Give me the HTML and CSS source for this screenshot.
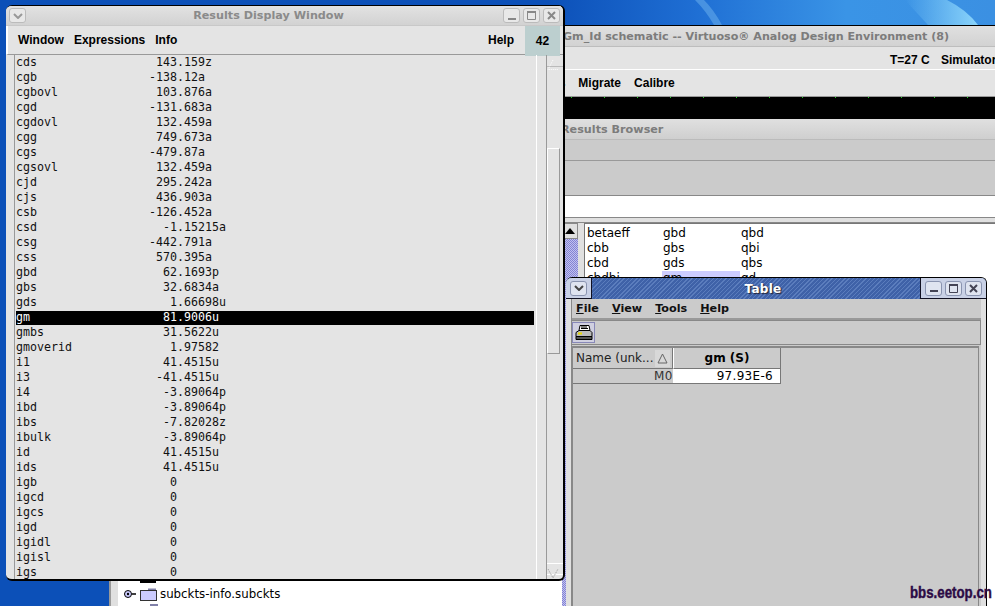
FILE: index.html
```html
<!DOCTYPE html>
<html lang="en">
<head>
<meta charset="utf-8">
<title>Results Display Window</title>
<link rel="stylesheet" href="styles.css">
</head>
<body>
<div class="desktop">
  <svg class="wallpaper" width="995" height="606" viewBox="0 0 995 606">
    <defs>
      <linearGradient id="sky" x1="0" y1="0" x2="1" y2="0"><stop offset=".55" stop-color="#0c50b8"/><stop offset=".7" stop-color="#1f6fd4"/><stop offset=".85" stop-color="#3a94e6"/><stop offset="1" stop-color="#3b90e2"/></linearGradient>
      <linearGradient id="band" x1="0" y1="0" x2="1" y2="0"><stop offset="0" stop-color="#8ad4fb" stop-opacity="0"/><stop offset="1" stop-color="#8ad4fb"/></linearGradient>
    </defs>
    <rect width="995" height="606" fill="url(#sky)"/>
    <path d="M905 0h42q20 10 31 25h-50z" fill="url(#band)"/>
    <path d="M695 0h9q10 10 18 25h-8q-8-14-19-25z" fill="#6fb4ee" opacity=".5"/>
  </svg>

  <section class="win-ade">
    <div class="ade-title">Gm_Id schematic -- Virtuoso® Analog Design Environment (8)</div>
    <div class="ade-status"><span class="st-temp">T=27 C</span><span>Simulator: spectre</span></div>
    <div class="ade-menu"><span>Results</span><span>Migrate</span><span>Calibre</span></div>
    <div class="ade-scope"></div>
    <div class="rb-title">Results Browser</div>
    <div class="rb-tool"></div>
    <div class="rb-tool2"></div>
    <div class="rb-entry"></div>
    <div class="rb-sep"></div>
    <div class="rb-body">
      <div class="tree">
        <div class="tree-stub"></div>
        <div class="tree-row">
          <svg class="knob" width="14" height="10" viewBox="0 0 14 10"><circle cx="5" cy="5" r="3.5" fill="#ccccff" stroke="#000"/><circle cx="5" cy="5" r="1.2" fill="#000"/><path d="M9 5h4" stroke="#000" stroke-width="1.5"/></svg>
          <svg width="17" height="14" viewBox="0 0 17 14"><path d="M8 1.5h8v2H8z" fill="#8080a8"/><rect x="0.5" y="3.5" width="16" height="10" fill="#ccccff" stroke="#333"/></svg>
          <span>subckts-info.subckts</span>
        </div>
        <div class="tree-next"></div>
      </div>
      <div class="rb-scroll"><div class="rb-up"><svg width="10" height="6" viewBox="0 0 10 6"><path d="M0 6 5 0l5 6z" fill="#000"/></svg></div><div class="rb-track"></div></div>
      <div class="sig-list">
        <span>betaeff</span><span>gbd</span><span>qbd</span>
        <span>cbb</span><span>gbs</span><span>qbi</span>
        <span>cbd</span><span>gds</span><span>qbs</span>
        <span>cbdbi</span><span class="sig-sel">gm</span><span>qd</span>
      </div>
    </div>
  </section>

  <section class="win-results">
    <header class="rd-title">
      <button class="wbtn"><svg width="10" height="6" viewBox="0 0 10 6"><path d="M1 1l4 4 4-4" fill="none" stroke="#999" stroke-width="2"/></svg></button>
      <span class="rd-title-text">Results Display Window</span>
      <button class="wbtn"><svg width="8" height="8" viewBox="0 0 8 8"><path d="M0 6h8v2H0z" fill="#888"/></svg></button>
      <button class="wbtn"><svg width="9" height="9" viewBox="0 0 9 9"><path d="M.5 1.5h8v7h-8z" fill="none" stroke="#888"/><path d="M0 0h9v2H0z" fill="#888"/></svg></button>
      <button class="wbtn"><svg width="9" height="9" viewBox="0 0 9 9"><path d="M1 1l7 7M8 1 1 8" stroke="#888" stroke-width="2"/></svg></button>
    </header>
    <nav class="rd-menu">
      <span>Window</span><span>Expressions</span><span>Info</span>
      <span class="rd-help">Help</span>
      <span class="rd-count">42</span>
    </nav>
    <div class="rd-body">
      <div class="rd-list">
        <div class="row"><span class="nm">cds</span><span class="int">143</span>.159z</div>
        <div class="row"><span class="nm">cgb</span><span class="int">-138</span>.12a</div>
        <div class="row"><span class="nm">cgbovl</span><span class="int">103</span>.876a</div>
        <div class="row"><span class="nm">cgd</span><span class="int">-131</span>.683a</div>
        <div class="row"><span class="nm">cgdovl</span><span class="int">132</span>.459a</div>
        <div class="row"><span class="nm">cgg</span><span class="int">749</span>.673a</div>
        <div class="row"><span class="nm">cgs</span><span class="int">-479</span>.87a</div>
        <div class="row"><span class="nm">cgsovl</span><span class="int">132</span>.459a</div>
        <div class="row"><span class="nm">cjd</span><span class="int">295</span>.242a</div>
        <div class="row"><span class="nm">cjs</span><span class="int">436</span>.903a</div>
        <div class="row"><span class="nm">csb</span><span class="int">-126</span>.452a</div>
        <div class="row"><span class="nm">csd</span><span class="int">-1</span>.15215a</div>
        <div class="row"><span class="nm">csg</span><span class="int">-442</span>.791a</div>
        <div class="row"><span class="nm">css</span><span class="int">570</span>.395a</div>
        <div class="row"><span class="nm">gbd</span><span class="int">62</span>.1693p</div>
        <div class="row"><span class="nm">gbs</span><span class="int">32</span>.6834a</div>
        <div class="row"><span class="nm">gds</span><span class="int">1</span>.66698u</div>
        <div class="row row-sel"><span class="nm">gm</span><span class="int">81</span>.9006u</div>
        <div class="row"><span class="nm">gmbs</span><span class="int">31</span>.5622u</div>
        <div class="row"><span class="nm">gmoverid</span><span class="int">1</span>.97582</div>
        <div class="row"><span class="nm">i1</span><span class="int">41</span>.4515u</div>
        <div class="row"><span class="nm">i3</span><span class="int">-41</span>.4515u</div>
        <div class="row"><span class="nm">i4</span><span class="int">-3</span>.89064p</div>
        <div class="row"><span class="nm">ibd</span><span class="int">-3</span>.89064p</div>
        <div class="row"><span class="nm">ibs</span><span class="int">-7</span>.82028z</div>
        <div class="row"><span class="nm">ibulk</span><span class="int">-3</span>.89064p</div>
        <div class="row"><span class="nm">id</span><span class="int">41</span>.4515u</div>
        <div class="row"><span class="nm">ids</span><span class="int">41</span>.4515u</div>
        <div class="row"><span class="nm">igb</span><span class="int">0</span></div>
        <div class="row"><span class="nm">igcd</span><span class="int">0</span></div>
        <div class="row"><span class="nm">igcs</span><span class="int">0</span></div>
        <div class="row"><span class="nm">igd</span><span class="int">0</span></div>
        <div class="row"><span class="nm">igidl</span><span class="int">0</span></div>
        <div class="row"><span class="nm">igisl</span><span class="int">0</span></div>
        <div class="row"><span class="nm">igs</span><span class="int">0</span></div>
      </div>
      <div class="rd-scroll">
        <div class="rd-arrow"><svg width="12" height="11" viewBox="0 0 12 11"><path d="M6 1 1 10.500h10" fill="none" stroke="#fff" stroke-dasharray="1 1"/></svg></div>
        <div class="rd-thumb"></div>
        <div class="rd-arrow rd-arrow-down"><svg width="12" height="11" viewBox="0 0 12 11"><path d="M1 1l5 9 5-9" fill="none" stroke="#999" stroke-dasharray="1 1"/></svg></div>
      </div>
    </div>
  </section>

  <section class="win-table">
    <header class="tb-title">
      <div class="tb-cap tb-cap-left"><button class="wbtn wbtn-b"><svg width="10" height="6" viewBox="0 0 10 6"><path d="M1 1l4 4 4-4" fill="none" stroke="#444" stroke-width="2"/></svg></button></div>
      <span class="tb-title-text">Table</span>
      <div class="tb-cap">
        <button class="wbtn wbtn-b"><svg width="8" height="8" viewBox="0 0 8 8"><path d="M0 6h8v2H0z" fill="#445"/></svg></button>
        <button class="wbtn wbtn-b"><svg width="9" height="9" viewBox="0 0 9 9"><path d="M.5 1.5h8v7h-8z" fill="none" stroke="#445"/><path d="M0 0h9v2H0z" fill="#445"/></svg></button>
        <button class="wbtn wbtn-b"><svg width="9" height="9" viewBox="0 0 9 9"><path d="M1 1l7 7M8 1 1 8" stroke="#445" stroke-width="2"/></svg></button>
      </div>
    </header>
    <div class="tb-inner">
      <nav class="tb-menu">
        <span><u>F</u>ile</span><span><u>V</u>iew</span><span><u>T</u>ools</span><span><u>H</u>elp</span>
      </nav>
      <div class="tb-tools">
        <button class="tb-print"><svg width="18" height="16" viewBox="0 0 18 16"><path d="M5 .5h9l1 5H4z" fill="#fff" stroke="#000"/><path d="M6 2h6M6 3.500h7" stroke="#000"/><path d="M1 7.500l3-2h11l2 2v4H1z" fill="#bbb" stroke="#000"/><path d="M1 11.500h16v3H1z" fill="#555" stroke="#000"/><path d="M3 8.500h4" stroke="#e8d800" stroke-width="2"/></svg></button>
      </div>
      <div class="tb-table">
        <div class="tb-grid">
          <div class="th th-name"><span>Name (unk...</span><span class="sort"><svg width="11" height="11" viewBox="0 0 11 11"><path d="M5.500 1 1 10h9z" fill="none" stroke="#666"/></svg></span></div>
          <div class="th th-gm">gm (S)</div>
          <div class="td-name">M0</div>
          <div class="td-val">97.93E-6</div>
        </div>
      </div>
    </div>
  </section>

  <div class="watermark">bbs.eetop.cn</div>
</div>
</body>
</html>
```

FILE: styles.css
```css
* { box-sizing: border-box; }
html, body { margin: 0; padding: 0; }
body { font-family: "DejaVu Sans", sans-serif; }
button { padding: 0; margin: 0; font: inherit; }

.desktop {
  position: relative;
  width: 995px;
  height: 606px;
  overflow: hidden;
  background: #0a49ab;
}
.wallpaper { position: absolute; left: 0; top: 0; display: block; }

/* Analog Design Environment window, behind */
.win-ade {
  position: absolute;
  left: 109px;
  top: 25px;
  width: 890px;
  height: 581px;
  display: flex;
  flex-direction: column;
  border-top: 1px solid #000;
  background: #e4e4e4;
  overflow: hidden;
}
.ade-title {
  height: 21px;
  flex: none;
  padding-left: 454px;
  font-size: 11.120px;
  font-weight: bold;
  line-height: 21px;
  color: #7c7c7c;
  white-space: nowrap;
  background: linear-gradient(#e0e0e0, #d2d2d2);
  border-bottom: 1px solid #bdbdbd;
}
.ade-status {
  height: 23px;
  flex: none;
  display: flex;
  padding-left: 781px;
  font-family: "Liberation Sans", sans-serif;
  font-size: 12px;
  font-weight: bold;
  line-height: 27px;
  white-space: nowrap;
  border-bottom: 1px solid #fff;
}
.st-temp { width: 51px; flex: none; }
.ade-menu {
  height: 27px;
  flex: none;
  display: flex;
  gap: 13px;
  padding-left: 413px;
  font-family: "Liberation Sans", sans-serif;
  font-size: 12px;
  font-weight: bold;
  line-height: 27px;
  border-bottom: 1px solid #999;
}
.ade-scope {
  height: 22px;
  flex: none;
  background:
    repeating-linear-gradient(90deg, #1fd01f 0 1px, transparent 1px 33px) 0 0 / 100% 1px no-repeat,
    #000;
}
.rb-title {
  height: 21px;
  flex: none;
  padding-left: 452px;
  font-size: 11.200px;
  font-weight: bold;
  line-height: 22px;
  color: #7c7c7c;
  background: linear-gradient(#e0e0e0, #cfcfcf);
  border-bottom: 1px solid #bbb;
}
.rb-tool { height: 21px; flex: none; background: #cbcbcb; border-bottom: 1px solid #999; }
.rb-tool2 { height: 35px; flex: none; background: #cbcbcb; border-bottom: 1px solid #888; }
.rb-entry { height: 22px; flex: none; background: #fff; border-bottom: 1px solid #888; }
.rb-sep { height: 5px; flex: none; background: #e0e0e0; border-bottom: 1px solid #888; }
.rb-body {
  flex: 1;
  min-height: 0;
  display: flex;
  padding-left: 7px;
  border-left: 2px solid #999;
  background: #e0e0e0;
}
.tree {
  width: 444px;
  flex: none;
  display: flex;
  flex-direction: column;
  justify-content: flex-end;
  padding-left: 5px;
  background: #fff;
}
.tree-stub { width: 16px; height: 2px; margin: 0 0 4px 17px; background: #000; }
.tree-row {
  display: flex;
  align-items: center;
  gap: 3px;
  font-size: 11.800px;
  line-height: 14px;
  height: 14px;
}
.tree-next { width: 8px; height: 2px; margin: 3px 0 0 27px; background: #8080a8; }
.rb-scroll { width: 16px; flex: none; display: flex; flex-direction: column; }
.rb-up {
  height: 16px;
  flex: none;
  display: flex;
  align-items: center;
  justify-content: center;
  background: #e0e0e0;
  border: 1px solid #888;
}
.rb-track {
  flex: 1;
  background: repeating-conic-gradient(#8484d2 0 25%, #c0c0f0 0 50%) 0 0 / 2px 2px;
}
.sig-list {
  margin-left: 6px;
  width: 420px;
  padding: 2px 0 0 1px;
  display: grid;
  grid-template-columns: 76px 78px 1fr;
  grid-auto-rows: 15px;
  font-size: 12px;
  line-height: 15px;
  background: #fff;
  border-left: 1px solid #777;
  border-top: 1px solid #777;
}
.sig-list span { padding-left: 1px; }
.sig-sel { background: #ccccff; }

/* Results Display Window */
.win-results {
  position: absolute;
  left: 6px;
  top: 5px;
  width: 559px;
  height: 576px;
  display: flex;
  flex-direction: column;
  background: #e4e4e4;
  border: 1px solid #000;
  border-width: 1px 2px 2px 0;
  border-radius: 6px;
  overflow: hidden;
}
.rd-title {
  height: 20px;
  flex: none;
  display: flex;
  align-items: center;
  gap: 3px;
  padding: 0 3px 0 3px;
  background: linear-gradient(#e2e2e2, #d2d2d2);
  border-bottom: 1px solid #c8c8c8;
}
.rd-title-text {
  flex: 1;
  text-align: center;
  font-size: 11.200px;
  font-weight: bold;
  color: #8a8a8a;
  padding-left: 8px;
}
.wbtn {
  width: 17px;
  height: 15px;
  flex: none;
  display: flex;
  align-items: center;
  justify-content: center;
  background: #e8e8e8;
  border: 1px solid #bbb;
  border-radius: 3px;
}
.rd-menu {
  height: 29px;
  flex: none;
  display: flex;
  align-items: center;
  gap: 10px;
  padding-left: 10px;
  padding-right: 4px;
  font-family: "Liberation Sans", sans-serif;
  font-size: 12px;
  font-weight: bold;
  border-bottom: 1px solid #999;
  border-left: 2px solid #fff;
  position: relative;
}
.rd-help { margin-left: auto; margin-right: 45px; }
.rd-count {
  position: absolute;
  right: 3px;
  top: 0;
  width: 35px;
  height: 30px;
  line-height: 30px;
  text-align: center;
  background: #bccfcf;
  color: #000;
}
.rd-body {
  flex: 1;
  min-height: 0;
  display: flex;
  padding-left: 8px;
  overflow: hidden;
}
.rd-list {
  width: 522px;
  flex: none;
  padding-left: 1px;
  border-left: 1px solid #999;
  font-family: "DejaVu Sans Mono", monospace;
  font-size: 11.630px;
  overflow: hidden;
}
.row {
  height: 15px;
  margin-right: 2px;
  padding-top: 1px;
  line-height: 12px;
  white-space: pre;
  display: flex;
  background-clip: content-box;
  color: #111;
}
.row-sel { background-color: #000; color: #fff; }
.nm { width: 112px; flex: none; }
.int { width: 49px; flex: none; text-align: right; }
.rd-scroll {
  width: 27px;
  flex: none;
  display: flex;
  flex-direction: column;
  border-left: 1px solid #fff;
  padding-left: 10px;
  position: relative;
}
.rd-scroll::before {
  content: "";
  position: absolute;
  left: 9px;
  top: -2px;
  bottom: 0;
  width: 1px;
  background: #999;
}
.rd-arrow { height: 12px; flex: none; border-bottom: 1px solid #bbb; }
.rd-arrow-down { margin-top: auto; margin-bottom: 4px; border-bottom: 1px solid #fff; border-top: 1px solid #fff; }
.rd-thumb {
  height: 206px;
  margin-top: 81px;
  width: 13px;
  border: 1px solid #999;
  border-top-color: #fff;
  border-left-color: #fff;
  flex: none;
}

/* Table window */
.win-table {
  position: absolute;
  left: 566px;
  top: 277px;
  width: 421px;
  height: 340px;
  display: flex;
  flex-direction: column;
  background: #e0e0e0;
  border-top: 1px solid #000;
  border-right: 1px solid #000;
  border-radius: 6px 6px 0 0;
  overflow: hidden;
}
.tb-title {
  height: 21px;
  flex: none;
  display: flex;
  align-items: stretch;
  background: repeating-linear-gradient(135deg, #3f62a8 0 2px, #5b7dbd 2px 3px);
}
.tb-cap {
  display: flex;
  align-items: center;
  gap: 3px;
  padding: 0 4px;
  background: #c9d1e6;
  border-left: 1px solid #112;
  border-bottom: 1px solid #112;
}
.tb-cap-left { border-left: 0; border-right: 1px solid #112; }
.tb-title-text {
  flex: 1;
  text-align: center;
  padding-left: 14px;
  color: #fff;
  font-size: 12px;
  font-weight: bold;
  line-height: 22px;
  letter-spacing: .3px;
  text-shadow: 1px 1px 1px #223;
}
.wbtn-b { background: #dfe4f0; border-color: #8a94b0; }
.tb-inner {
  flex: 1;
  margin: 0 5px 0 5px;
  display: flex;
  flex-direction: column;
  background: #cbcbcb;
  border-left: 1px solid #888;
}
.tb-menu {
  height: 21px;
  flex: none;
  display: flex;
  align-items: center;
  gap: 13px;
  padding-left: 4px;
  font-size: 11.200px;
  font-weight: bold;
  color: #111;
  border-bottom: 2px solid #999;
}
.tb-tools {
  height: 25px;
  flex: none;
  padding: 1px 0 0 0;
  border: 1px solid #888;
  border-left: 0;
}
.tb-print {
  width: 23px;
  height: 21px;
  display: flex;
  align-items: center;
  justify-content: center;
  background: #d0d0e0;
  border: 1px solid #8888b8;
}
.tb-table {
  flex: 1;
  margin-top: 1px;
  margin-right: 2px;
  border-top: 2px solid #888;
  border-left: 1px solid #888;
  border-right: 1px solid #888;
  font-size: 12px;
}
.tb-grid {
  display: grid;
  grid-template-columns: 100px 108px;
  grid-template-rows: 21px 15px;
  width: max-content;
}
.th {
  display: flex;
  align-items: center;
  background: #cbcbcb;
  border-right: 1px solid #777;
  border-bottom: 1px solid #777;
}
.th-name { justify-content: space-between; padding: 0 2px 0 3px; color: #222; }
.sort { width: 15px; height: 17px; display: flex; align-items: center; justify-content: center; background: #d8d8d8; }
.th-gm { justify-content: center; font-weight: bold; border-left: 1px solid #fff; }
.td-name {
  text-align: right;
  line-height: 15px;
  color: #333;
  letter-spacing: .5px;
  background: #cbcbcb;
  border-bottom: 1px solid #777;
}
.td-val {
  text-align: right;
  line-height: 15px;
  padding-right: 7px;
  background: #fff;
  letter-spacing: .3px;
  border-right: 1px solid #777;
  border-bottom: 1px solid #777;
}

.watermark {
  position: absolute;
  left: 910px;
  top: 584px;
  font-family: "Liberation Sans", sans-serif;
  font-size: 16px;
  font-weight: bold;
  color: #2b0a45;
  white-space: nowrap;
  transform: scaleX(.83);
  transform-origin: left top;
  -webkit-text-stroke: .4px #2b0a45;
}
```
